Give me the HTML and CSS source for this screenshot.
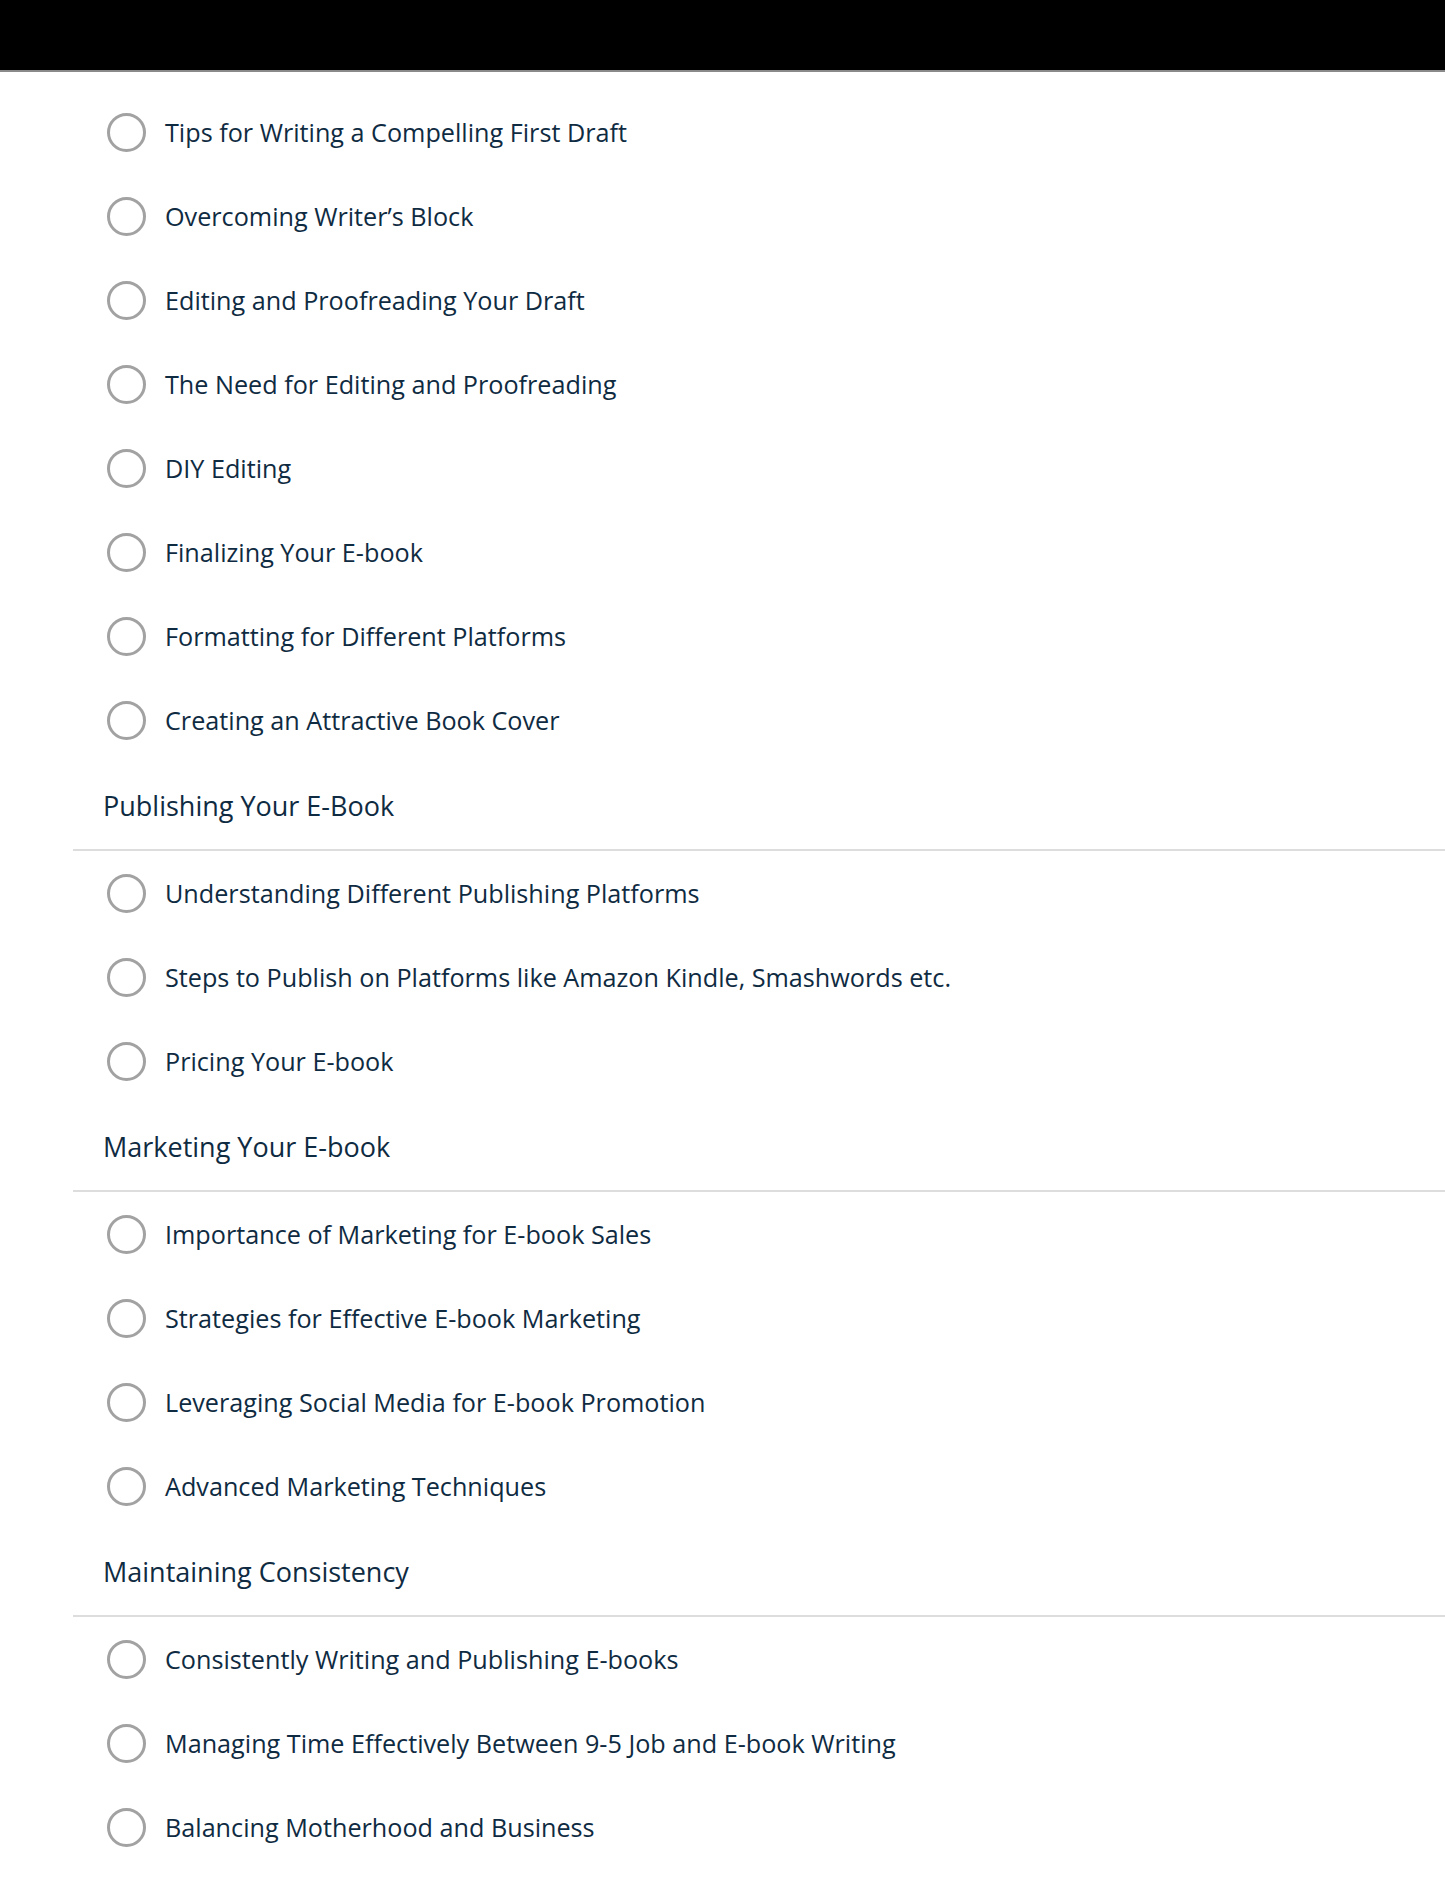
FILE: index.html
```html
<!DOCTYPE html>
<html lang="en">
<head>
<meta charset="utf-8">
<title>Course outline</title>
<link rel="stylesheet" href="styles.css">
</head>
<body>
<div class="topbar"></div>
<main class="outline">
  <ul class="lessons">
    <li class="lesson"><span class="radio"></span><span class="label">Tips for Writing a Compelling First Draft</span></li>
    <li class="lesson"><span class="radio"></span><span class="label">Overcoming Writer’s Block</span></li>
    <li class="lesson"><span class="radio"></span><span class="label">Editing and Proofreading Your Draft</span></li>
    <li class="lesson"><span class="radio"></span><span class="label">The Need for Editing and Proofreading</span></li>
    <li class="lesson"><span class="radio"></span><span class="label">DIY Editing</span></li>
    <li class="lesson"><span class="radio"></span><span class="label">Finalizing Your E-book</span></li>
    <li class="lesson"><span class="radio"></span><span class="label">Formatting for Different Platforms</span></li>
    <li class="lesson"><span class="radio"></span><span class="label">Creating an Attractive Book Cover</span></li>
  </ul>
  <section class="module">
    <h2 class="module-title">Publishing Your E-Book</h2>
    <ul class="lessons">
      <li class="lesson"><span class="radio"></span><span class="label">Understanding Different Publishing Platforms</span></li>
      <li class="lesson"><span class="radio"></span><span class="label">Steps to Publish on Platforms like Amazon Kindle, Smashwords etc.</span></li>
      <li class="lesson"><span class="radio"></span><span class="label">Pricing Your E-book</span></li>
    </ul>
  </section>
  <section class="module">
    <h2 class="module-title">Marketing Your E-book</h2>
    <ul class="lessons">
      <li class="lesson"><span class="radio"></span><span class="label">Importance of Marketing for E-book Sales</span></li>
      <li class="lesson"><span class="radio"></span><span class="label">Strategies for Effective E-book Marketing</span></li>
      <li class="lesson"><span class="radio"></span><span class="label">Leveraging Social Media for E-book Promotion</span></li>
      <li class="lesson"><span class="radio"></span><span class="label">Advanced Marketing Techniques</span></li>
    </ul>
  </section>
  <section class="module">
    <h2 class="module-title">Maintaining Consistency</h2>
    <ul class="lessons">
      <li class="lesson"><span class="radio"></span><span class="label">Consistently Writing and Publishing E-books</span></li>
      <li class="lesson"><span class="radio"></span><span class="label">Managing Time Effectively Between 9-5 Job and E-book Writing</span></li>
      <li class="lesson"><span class="radio"></span><span class="label">Balancing Motherhood and Business</span></li>
    </ul>
  </section>
</main>
</body>
</html>
```
FILE: styles.css
```css
* { box-sizing: border-box; }
html, body { margin: 0; padding: 0; background: #ffffff; }
body {
  font-family: "Open Sans", "Noto Sans", "Liberation Sans", sans-serif;
  color: #0f2b42;
}
.topbar {
  height: 72px;
  background: #000000;
  border-bottom: 2px solid #8a8a8a;
}
.outline {
  padding-top: 18px;
}
.lessons {
  list-style: none;
  margin: 0;
  padding: 0;
}
.lesson {
  height: 84px;
  display: flex;
  align-items: center;
  padding-left: 107px;
  gap: 19px;
}
.radio {
  flex: none;
  width: 39px;
  height: 39px;
  border: 3.5px solid #a2a2a2;
  border-radius: 50%;
}
.label {
  font-size: 25.2px;
  line-height: 1.2;
}
.module-title {
  margin: 0 0 0 73px;
  height: 89px;
  display: flex;
  align-items: center;
  padding-left: 30px;
  font-size: 27px;
  font-weight: 400;
  border-bottom: 2px solid #dddddd;
}
```
